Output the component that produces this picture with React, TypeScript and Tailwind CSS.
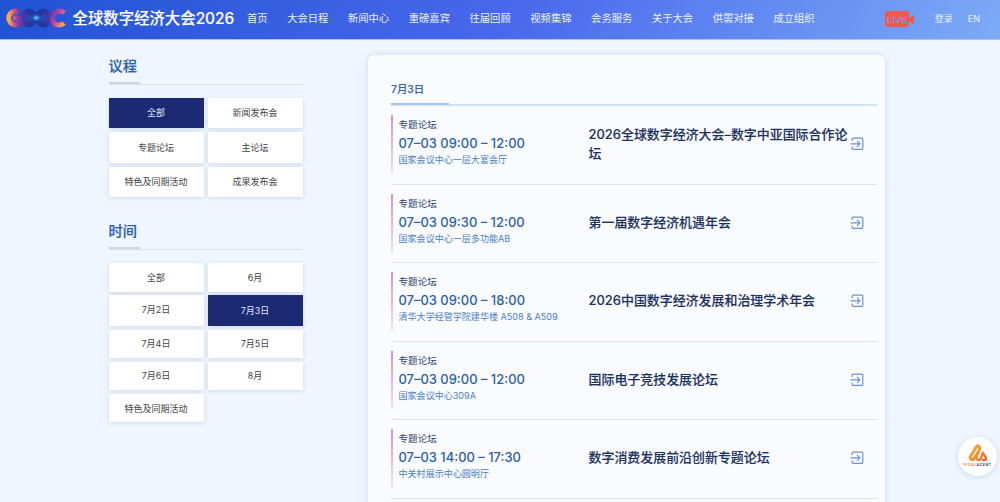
import { clsx } from "clsx";

const navItems = [
  "首页",
  "大会日程",
  "新闻中心",
  "重磅嘉宾",
  "往届回顾",
  "视频集锦",
  "会务服务",
  "关于大会",
  "供需对接",
  "成立组织",
];

const categories = ["全部", "新闻发布会", "专题论坛", "主论坛", "特色及同期活动", "成果发布会"];

const dates = ["全部", "6月", "7月2日", "7月3日", "7月4日", "7月5日", "7月6日", "8月", "特色及同期活动"];

const sessions = [
  {
    type: "专题论坛",
    time: "07–03 09:00 – 12:00",
    place: "国家会议中心一层大宴会厅",
    title: "2026全球数字经济大会–数字中亚国际合作论坛",
  },
  {
    type: "专题论坛",
    time: "07–03 09:30 – 12:00",
    place: "国家会议中心一层多功能AB",
    title: "第一届数字经济机遇年会",
  },
  {
    type: "专题论坛",
    time: "07–03 09:00 – 18:00",
    place: "清华大学经管学院建华楼 A508 & A509",
    title: "2026中国数字经济发展和治理学术年会",
  },
  {
    type: "专题论坛",
    time: "07–03 09:00 – 12:00",
    place: "国家会议中心309A",
    title: "国际电子竞技发展论坛",
  },
  {
    type: "专题论坛",
    time: "07–03 14:00 – 17:30",
    place: "中关村展示中心圆明厅",
    title: "数字消费发展前沿创新专题论坛",
  },
];

const Logo = () => (
  <svg className="block h-[22px] w-[62px] shrink-0" viewBox="0 0 62 22" fill="none">
    <defs>
      <linearGradient id="ringLeft" x1="0" y1="0" x2="1" y2="0">
        <stop offset="0" stopColor="#f9b03c" />
        <stop offset="0.5" stopColor="#dd5183" />
        <stop offset="1" stopColor="#6a39b0" />
      </linearGradient>
      <linearGradient id="ringRight" x1="0" y1="0.2" x2="1" y2="0.8">
        <stop offset="0" stopColor="#6a3cb5" />
        <stop offset="0.45" stopColor="#cf45a0" />
        <stop offset="1" stopColor="#f6a14b" />
      </linearGradient>
      <linearGradient id="ringInnerLeft" x1="0" y1="0" x2="1" y2="0">
        <stop offset="0" stopColor="#5a35ab" />
        <stop offset="0.4" stopColor="#24379f" />
        <stop offset="1" stopColor="#1f3aa8" />
      </linearGradient>
      <linearGradient id="ringInnerRight" x1="0" y1="0" x2="1" y2="0">
        <stop offset="0" stopColor="#1f3aa8" />
        <stop offset="0.6" stopColor="#24379f" />
        <stop offset="1" stopColor="#5a35ab" />
      </linearGradient>
      <radialGradient id="spark">
        <stop offset="0" stopColor="#7df5f2" />
        <stop offset="0.3" stopColor="#43b5e6" stopOpacity="0.75" />
        <stop offset="1" stopColor="#2d6cd6" stopOpacity="0" />
      </radialGradient>
    </defs>
    <ellipse cx="23.5" cy="11" rx="6.5" ry="6.8" fill="#2b43b4" stroke="url(#ringInnerLeft)" strokeWidth="5.6" />
    <ellipse cx="39" cy="11" rx="6.5" ry="6.8" fill="#2b43b4" stroke="url(#ringInnerRight)" strokeWidth="5.6" />
    <path d="M14.5 5.2A6.9 6.9 0 1 0 14.5 16.8V11H8" stroke="url(#ringLeft)" strokeWidth="5" />
    <path d="M59 6A7 7 0 1 0 59 16" stroke="url(#ringRight)" strokeWidth="5" />
    <ellipse cx="31.3" cy="10.8" rx="5.5" ry="4" fill="url(#spark)" />
  </svg>
);

const LiveBadge = () => (
  <div className="flex items-center">
    <span className="flex h-4 w-6 items-center justify-center rounded-[2.5px] bg-[#f0594f] font-['Liberation_Sans'] text-[9.5px] leading-none text-[#7b9bf0] [-webkit-text-stroke:0.2px]">
      LIVE
    </span>
    <svg className="h-[9px] w-[5px]" viewBox="0 0 5 9" fill="#f0594f">
      <path d="M0 3L5 0V9L0 6Z" />
    </svg>
  </div>
);

const EnterIcon = () => (
  <svg className="h-[14px] w-[14px] shrink-0" viewBox="0 0 14 14" fill="none" stroke="#6c93cf" strokeWidth="1.2">
    <path d="M2.2 4V2.1Q2.2 1.1 3.2 1.1H11.8Q12.8 1.1 12.8 2.1V11.3Q12.8 12.3 11.8 12.3H3.2Q2.2 12.3 2.2 11.3V9.6" />
    <path d="M0.5 6.8H9.8M7 3.8L9.9 6.8L7 9.8" />
  </svg>
);

const SectionHeading = ({ text }: { text: string }) => (
  <div className="h-[30px] border-b border-[#dde2ea]">
    <h2 className="h-[29px] w-[31px] whitespace-nowrap border-b-2 border-[#d3d6dc] text-[14.2px] leading-[21px] font-medium text-[#2c62ad] [-webkit-text-stroke:0.2px]">
      {text}
    </h2>
  </div>
);

const FilterButton = ({ label, active, className }: { label: string; active: boolean; className?: string }) => (
  <button
    className={clsx(
      "flex items-center justify-center text-[9px] shadow-[0_1px_4px_rgba(60,80,120,0.18)]",
      active ? "bg-[#1b2a72] text-[#dfe4f5]" : "bg-white text-[#444]",
      className
    )}
  >
    {label}
  </button>
);

const Header = () => (
  <header className="flex h-[39.5px] shrink-0 items-center border-b border-[#a9c3f5] bg-[linear-gradient(120deg,#2153d4_0%,#4867ec_50%,#7cabf6_100%)] pb-[2px] text-white">
    <div className="flex w-[247px] shrink-0 items-center pl-[4.5px]">
      <Logo />
      <span className="ml-[6px] whitespace-nowrap text-[15.4px] font-medium [-webkit-text-stroke:0.12px]">
        全球数字经济大会2026
      </span>
    </div>
    <nav className="flex gap-[19.6px] text-[10.3px] text-white/90">
      {navItems.map((item) => (
        <a key={item} href="#" className="whitespace-nowrap">
          {item}
        </a>
      ))}
    </nav>
    <div className="ml-auto flex items-center pr-5 text-[9px] text-white/85">
      <div className="pt-[2px]">
        <LiveBadge />
      </div>
      <span className="ml-[20.5px]">登录</span>
      <span className="ml-[15px]">EN</span>
    </div>
  </header>
);

const Sidebar = () => (
  <aside className="w-[194px] shrink-0 pt-[15.5px]">
    <SectionHeading text="议程" />
    <div className="mt-[12.6px] grid grid-cols-2 gap-x-1 gap-y-[4px]">
      {categories.map((label, i) => (
        <FilterButton key={label} label={label} active={i === 0} className="h-[30.6px]" />
      ))}
    </div>
    <div className="mt-[23px]">
      <SectionHeading text="时间" />
    </div>
    <div className="mt-[13px] grid grid-cols-2 gap-x-1 gap-y-[3.7px]">
      {dates.map((label, i) => (
        <FilterButton
          key={label}
          label={label}
          active={i === 3}
          className={clsx(i === 2 || i === 3 ? "h-[30.8px]" : "h-[28.4px]", i === 2 && "pb-[2px]")}
        />
      ))}
    </div>
  </aside>
);

const Schedule = () => (
  <main className="ml-[65px] w-[517px] shrink-0 self-stretch pt-[15.5px]">
    <div className="h-[500px] rounded-md bg-[#f9fbff] pt-[23px] pr-2 pl-[23px] shadow-[0_0_6px_rgba(70,110,160,0.2)]">
      <div className="h-[28px] border-b-2 border-[#d3e4f7]">
        <div className="h-[27px] w-[58.5px] border-b-2 border-[#a5c5e8] pl-[0.5px] text-[10.4px] leading-[23px] font-medium text-[#3465ab] [-webkit-text-stroke:0.15px]">
          7月3日
        </div>
      </div>
      {sessions.map((s) => (
        <div key={s.title} className="flex h-[78.5px] border-b border-[#d6e4f3] pt-[9px]">
          <div className="h-[58px] w-[2px] bg-gradient-to-b from-[#c994d8] to-[#efdff8]" />
          <div className="w-[196px] pl-[6px] whitespace-nowrap">
            <div className="text-[9.6px] leading-[20px] text-[#29416f]">{s.type}</div>
            <div className="text-[12.95px] leading-[17px] font-medium text-[#2c5fa8]">{s.time}</div>
            <div className="text-[9.05px] leading-[16px] text-[#4a80c5]">{s.place}</div>
          </div>
          <div className="flex h-[58px] w-[275px] items-center justify-between">
            <h3 className="w-[260.5px] shrink-0 text-[12.95px] leading-[19.3px] font-medium text-[#1d315f] [-webkit-text-stroke:0.12px]">
              {s.title}
            </h3>
            <EnterIcon />
          </div>
        </div>
      ))}
    </div>
  </main>
);

const AgentButton = () => (
  <button className="absolute top-[436.5px] left-[958px] flex h-[39px] w-[39px] flex-col items-center rounded-full bg-white pt-[6.5px] shadow-[0_1px_6px_rgba(60,90,140,0.2)]">
    <svg className="h-5 w-5" viewBox="0 0 20 20" fill="none" strokeLinecap="round" strokeLinejoin="round">
      <defs>
        <linearGradient id="agent" x1="0" y1="0" x2="20" y2="20" gradientUnits="userSpaceOnUse">
          <stop offset="0" stopColor="#f7b52c" />
          <stop offset="0.5" stopColor="#f39330" />
          <stop offset="1" stopColor="#e94e35" />
        </linearGradient>
      </defs>
      <path
        d="M10 9.2L6.2 15.4Q4.8 17.4 3 16.2Q1.6 15 2.8 13L8.2 4Q9.8 1.6 11.4 3.8Q12 5 11.4 6.6"
        stroke="url(#agent)"
        strokeWidth="3"
      />
      <path
        d="M11.2 7.2L8.8 13.2Q8 16.6 10.2 17Q12 17 13.2 14.6L14.8 9.6L17.8 14.4Q18.8 16.6 16.4 17H14.8"
        stroke="url(#agent)"
        strokeWidth="2.4"
      />
    </svg>
    <span className="flex text-[3.4px] leading-[4px] font-bold tracking-[0.6px] text-[#3b3f66]">
      <span className="text-[#ef7d35]">SIGAL</span>AGENT
    </span>
  </button>
);

export default function App() {
  return (
    <div className="relative flex h-[502px] w-[1000px] flex-col overflow-hidden bg-[#eff6ff] font-[Inter,'Noto_Sans_CJK_SC',sans-serif]">
      <Header />
      <div className="flex min-h-0 flex-1 items-start pl-[108.5px]">
        <Sidebar />
        <Schedule />
      </div>
      <AgentButton />
    </div>
  );
}
